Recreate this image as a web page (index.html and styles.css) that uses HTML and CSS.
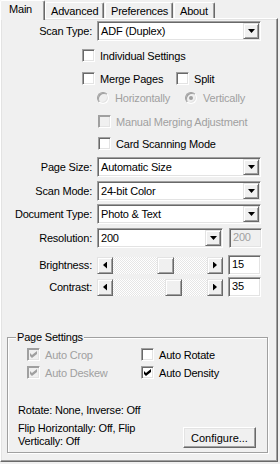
FILE: index.html
```html
<!DOCTYPE html>
<html lang="en">
<head>
    <meta charset="UTF-8">
    <meta name="viewport" content="width=device-width, initial-scale=1.0">
    <title>Scanner Settings</title>
    <link rel="stylesheet" href="styles.css">
</head>
<body>
    <div class="tabs">
        <div class="tab tab-main active">Main</div>
        <div class="tab tab-adv">Advanced</div>
        <div class="tab tab-pref">Preferences</div>
        <div class="tab tab-about">About</div>
    </div>

    <div class="panel">
        <div class="field">
            <span class="label">Scan Type:</span>
            <div class="combo"><span class="value">ADF (Duplex)</span><span class="drop"></span></div>
        </div>

        <div class="chk row-individual"><span class="box"></span><span>Individual Settings</span></div>

        <div class="line row-merge">
            <div class="chk merge"><span class="box"></span><span>Merge Pages</span></div>
            <div class="chk"><span class="box"></span><span>Split</span></div>
        </div>

        <div class="line row-radio disabled">
            <div class="radio-item horiz"><span class="radio"></span><span>Horizontally</span></div>
            <div class="radio-item"><span class="radio on"></span><span>Vertically</span></div>
        </div>

        <div class="chk row-manual disabled"><span class="box"></span><span>Manual Merging Adjustment</span></div>
        <div class="chk row-card"><span class="box"></span><span>Card Scanning Mode</span></div>

        <div class="field row-pagesize">
            <span class="label">Page Size:</span>
            <div class="combo"><span class="value">Automatic Size</span><span class="drop"></span></div>
        </div>
        <div class="field row-mode">
            <span class="label">Scan Mode:</span>
            <div class="combo"><span class="value">24-bit Color</span><span class="drop"></span></div>
        </div>
        <div class="field row-doc">
            <span class="label">Document Type:</span>
            <div class="combo"><span class="value">Photo &amp; Text</span><span class="drop"></span></div>
        </div>
        <div class="field row-res">
            <span class="label">Resolution:</span>
            <div class="combo short"><span class="value">200</span><span class="drop"></span></div>
            <div class="edit disabled">200</div>
        </div>
        <div class="field row-bright">
            <span class="label">Brightness:</span>
            <div class="slider">
                <span class="sbtn left"></span>
                <span class="track"><span class="thumb" style="margin-left: 44px"></span></span>
                <span class="sbtn right"></span>
            </div>
            <div class="edit">15</div>
        </div>
        <div class="field row-contrast">
            <span class="label">Contrast:</span>
            <div class="slider">
                <span class="sbtn left"></span>
                <span class="track"><span class="thumb" style="margin-left: 52px"></span></span>
                <span class="sbtn right"></span>
            </div>
            <div class="edit">35</div>
        </div>

        <fieldset class="group">
            <legend>Page Settings</legend>
            <div class="group-checks">
                <div class="chk disabled"><span class="box checked"></span><span>Auto Crop</span></div>
                <div class="chk"><span class="box"></span><span>Auto Rotate</span></div>
                <div class="chk disabled"><span class="box checked"></span><span>Auto Deskew</span></div>
                <div class="chk"><span class="box checked"></span><span>Auto Density</span></div>
            </div>
            <div class="info rotate-line">Rotate: None, Inverse: Off</div>
            <div class="group-bottom">
                <div class="info">Flip Horizontally: Off, Flip<br>Vertically: Off</div>
                <button class="btn">Configure...</button>
            </div>
        </fieldset>
    </div>
</body>
</html>
```

FILE: styles.css
```css
body {
    margin: 0;
    width: 280px;
    height: 464px;
    overflow: hidden;
    background: #f0f0f0;
    font-family: 'Liberation Sans', Arial, sans-serif;
    font-size: 11px;
    letter-spacing: -0.2px;
    color: #000;
}

/* tabs */
.tabs {
    display: flex;
    align-items: flex-end;
    height: 18px;
    padding-left: 2px;
    position: relative;
    z-index: 1;
}

.tab {
    box-sizing: border-box;
    height: 16px;
    padding: 2px 0 0 5px;
    line-height: 13px;
    border: 1px solid #fff;
    border-right-color: #696969;
    border-bottom: none;
    box-shadow: inset -1px 0 #a0a0a0;
    border-radius: 2px 2px 0 0;
}

.tab-adv { width: 59px; }
.tab-pref { width: 68px; margin-left: 1px; }
.tab-about { width: 41px; margin-left: 1px; }

.tab.active {
    width: 45px;
    height: 20px;
    margin: 0 0 -2px -2px;
    padding: 0 0 0 8px;
    line-height: 17px;
    background: #f0f0f0;
}

/* main panel */
.panel {
    box-sizing: border-box;
    width: 278px;
    height: 444px;
    padding-top: 2px;
    border: 1px solid;
    border-color: #fff #696969 #696969 #fff;
    box-shadow: inset -1px -1px #a0a0a0, inset 1px 1px #e3e3e3;
}

.field {
    display: flex;
    align-items: center;
    height: 20px;
}

.field .label {
    width: 91px;
    margin-right: 5px;
    text-align: right;
}

.combo {
    box-sizing: border-box;
    width: 164px;
    height: 20px;
    padding: 1px;
    display: flex;
    align-items: center;
    justify-content: space-between;
    background: #fff;
    border: 1px solid;
    border-color: #a0a0a0 #fff #fff #a0a0a0;
    box-shadow: inset 1px 1px #696969, inset -1px -1px #e3e3e3;
}

.combo.short { width: 126px; }

.combo .value { padding-left: 2px; }

.drop, .sbtn, .thumb, .btn {
    box-sizing: border-box;
    background: #f0f0f0;
    border: 1px solid;
    border-color: #e3e3e3 #696969 #696969 #e3e3e3;
    box-shadow: inset 1px 1px #fff, inset -1px -1px #a0a0a0;
}

.drop {
    width: 16px;
    height: 16px;
    display: flex;
    align-items: center;
    justify-content: center;
}

.drop::after {
    content: "";
    width: 7px;
    height: 4px;
    margin-left: 1px;
    background: #000;
    clip-path: polygon(0 0, 100% 0, 50% 100%);
}

.edit {
    box-sizing: border-box;
    width: 33px;
    height: 20px;
    margin-left: 5px;
    padding: 2px 0 0 3px;
    background: #fff;
    border: 1px solid;
    border-color: #a0a0a0 #fff #fff #a0a0a0;
    box-shadow: inset 1px 1px #696969, inset -1px -1px #e3e3e3;
}

.row-res .edit { margin-left: 6px; }

.edit.disabled {
    background: #f0f0f0;
    color: #a0a0a0;
}

/* slider */
.slider {
    display: flex;
    width: 126px;
    height: 17px;
}

.sbtn {
    width: 16px;
    height: 17px;
    display: flex;
    align-items: center;
    justify-content: center;
}

.sbtn::after {
    content: "";
    width: 4px;
    height: 7px;
    background: #000;
}

.sbtn.left::after { clip-path: polygon(100% 0, 100% 100%, 0 50%); }
.sbtn.right::after { clip-path: polygon(0 0, 0 100%, 100% 50%); }

.track {
    flex: 1;
    display: flex;
    background: repeating-conic-gradient(#fff 0 25%, #e6e6e6 0 50%) 0 0 / 2px 2px;
}

.thumb {
    width: 17px;
    height: 17px;
}

/* check boxes and radios */
.chk, .radio-item {
    display: flex;
    align-items: center;
    height: 13px;
}

.box {
    box-sizing: border-box;
    width: 13px;
    height: 13px;
    margin-right: 5px;
    background: #fff;
    border: 1px solid;
    border-color: #a0a0a0 #fff #fff #a0a0a0;
    box-shadow: inset 1px 1px #696969, inset -1px -1px #e3e3e3;
    display: flex;
    align-items: center;
    justify-content: center;
}

.box.checked::after {
    content: "";
    width: 7px;
    height: 7px;
    background: #000;
    clip-path: polygon(0 28%, 28% 57%, 100% 0, 100% 43%, 28% 100%, 0 72%);
}

.radio {
    box-sizing: border-box;
    width: 12px;
    height: 12px;
    margin-right: 6px;
    border-radius: 50%;
    border: 1px solid;
    border-color: #a0a0a0 #fff #fff #a0a0a0;
    box-shadow: inset 1px 1px #696969;
    display: flex;
    align-items: center;
    justify-content: center;
}

.radio.on::after {
    content: "";
    width: 4px;
    height: 4px;
    border-radius: 50%;
    background: #a0a0a0;
}

.disabled { color: #a0a0a0; }

.disabled .box, .disabled .radio {
    background: #f0f0f0;
    box-shadow: inset 1px 1px #a0a0a0, inset -1px -1px #e3e3e3;
}

.disabled .box.checked::after { background: #a0a0a0; }

.line { display: flex; }

.row-individual { margin: 8px 0 0 81px; }
.row-merge { margin: 10px 0 0 81px; }
.merge { width: 94px; }
.row-radio { margin: 6px 0 0 96px; }
.horiz { width: 88px; }
.row-manual { margin: 11px 0 0 97px; }
.row-card { margin: 9px 0 0 97px; }
.row-pagesize { margin-top: 7px; }
.row-mode { margin-top: 4px; }
.row-doc { margin-top: 3px; }
.row-res { margin-top: 4px; }
.row-bright { margin-top: 7px; }
.row-contrast { margin-top: 2px; }

/* page settings group */
.group {
    box-sizing: border-box;
    width: 261px;
    height: 122px;
    margin: 34px 0 0 6px;
    padding: 4px 11px 0 10px;
    border: 1px solid #a0a0a0;
    box-shadow: 1px 1px #fff, inset 1px 1px #fff;
}

.group legend {
    padding: 0 1px;
    margin-left: -2px;
    line-height: 13px;
    background: #f0f0f0;
}

.group-checks {
    display: grid;
    grid-template-columns: 114px auto;
    row-gap: 5px;
    margin-left: 9px;
}

.info { line-height: 13px; }

.rotate-line { margin-top: 25px; }

.group-bottom {
    display: flex;
    align-items: flex-start;
    justify-content: space-between;
    margin-top: 5px;
}

.btn {
    width: 73px;
    height: 21px;
    margin-top: 5px;
    padding: 0;
    font: inherit;
    color: #000;
    border-color: #fff #696969 #696969 #fff;
    box-shadow: inset -1px -1px #a0a0a0, inset 1px 1px #e3e3e3;
}
```
